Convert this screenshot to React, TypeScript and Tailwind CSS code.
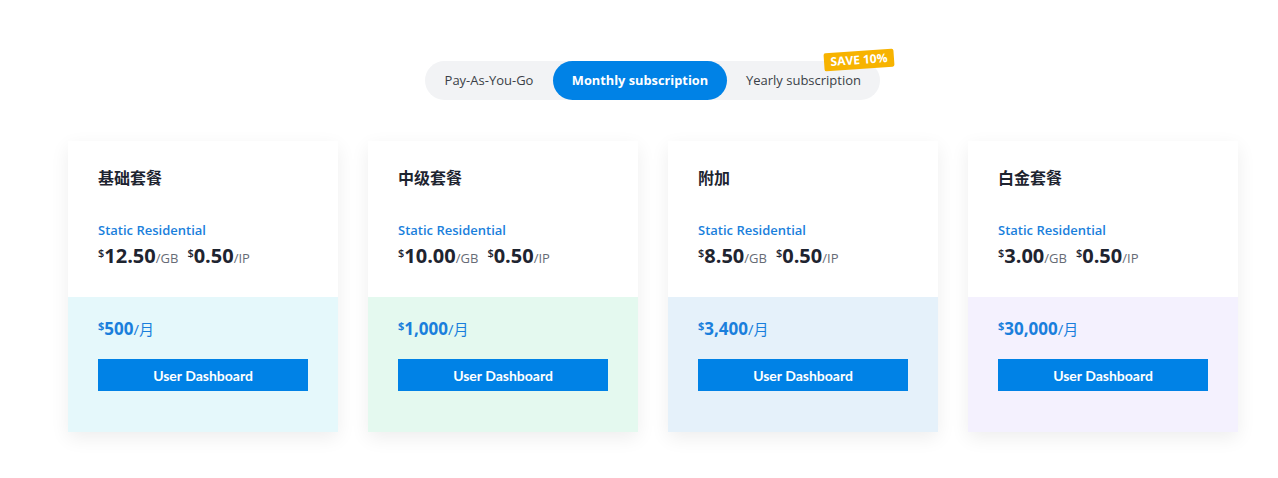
import React from "react";

const plans = [
  { name: "基础套餐", gb: "12.50", ip: "0.50", month: "500", bg: "bg-[#e5f8fb]" },
  { name: "中级套餐", gb: "10.00", ip: "0.50", month: "1,000", bg: "bg-[#e4f9ef]" },
  { name: "附加", gb: "8.50", ip: "0.50", month: "3,400", bg: "bg-[#e5f1fa]" },
  { name: "白金套餐", gb: "3.00", ip: "0.50", month: "30,000", bg: "bg-[#f4f1fe]" },
];

const font = "font-['Open_Sans','Noto_Sans_CJK_SC',sans-serif]";

export default function App() {
  return (
    <div className={`w-[1278px] h-[478px] bg-white ${font}`}>
      <div className="pt-[61px] pl-[425px]">
        <div className="relative flex w-[455px] h-[39px] items-center rounded-full bg-[#f2f3f5] text-[13px]">
          <div className="w-[128px] text-center text-[#3b3f47]">Pay-As-You-Go</div>
          <div className="flex h-[39px] w-[174px] items-center justify-center rounded-full bg-[#0082e6] text-[12.8px] font-bold text-white">
            Monthly subscription
          </div>
          <div className="flex-1 text-center text-[#3b3f47]">Yearly subscription</div>
          <div className="absolute right-[-14px] top-[-10px] flex h-[18px] w-[70px] -rotate-[4deg] items-center justify-center rounded-[2px] bg-[#f7b300] text-[12px] font-bold text-white">
            SAVE 10%
          </div>
        </div>
      </div>

      <div className="mt-[41px] flex gap-[30px] pl-[68px]">
        {plans.map((p) => (
          <div
            key={p.name}
            className="flex w-[270px] flex-col bg-white shadow-[0_6px_18px_rgba(0,0,0,0.07)]"
          >
            <div className="h-[156px] px-[30px] pt-[26px]">
              <div className="text-[16px] font-bold leading-[22px] text-[#1e2430]">{p.name}</div>
              <div className="mt-[32px] text-[13px] font-semibold leading-[18px] text-[#1a7fdc]">
                Static Residential
              </div>
              <div className="mt-[3px] flex items-baseline text-[#1e2430]">
                <span className="self-start pt-[3px] text-[11px] font-semibold">$</span>
                <span className="text-[20px] font-bold leading-[28px]">{p.gb}</span>
                <span className="text-[13px] text-[#666b75]">/GB</span>
                <span className="ml-[9px] self-start pt-[3px] text-[11px] font-semibold">$</span>
                <span className="text-[20px] font-bold leading-[28px]">{p.ip}</span>
                <span className="text-[13px] text-[#666b75]">/IP</span>
              </div>
            </div>
            <div className={`h-[135px] px-[30px] pt-[20px] ${p.bg}`}>
              <div className="flex items-baseline text-[#1a7fdc]">
                <span className="self-start pt-[1px] text-[11px] font-bold">$</span>
                <span className="text-[17px] font-bold leading-[24px]">{p.month}</span>
                <span className="text-[15px]">/月</span>
              </div>
              <button className="mt-[18px] flex h-[32px] w-[210px] items-center justify-center bg-[#0082e6] font-['Lato',sans-serif] text-[14px] font-bold text-white">
                User Dashboard
              </button>
            </div>
          </div>
        ))}
      </div>
    </div>
  );
}
